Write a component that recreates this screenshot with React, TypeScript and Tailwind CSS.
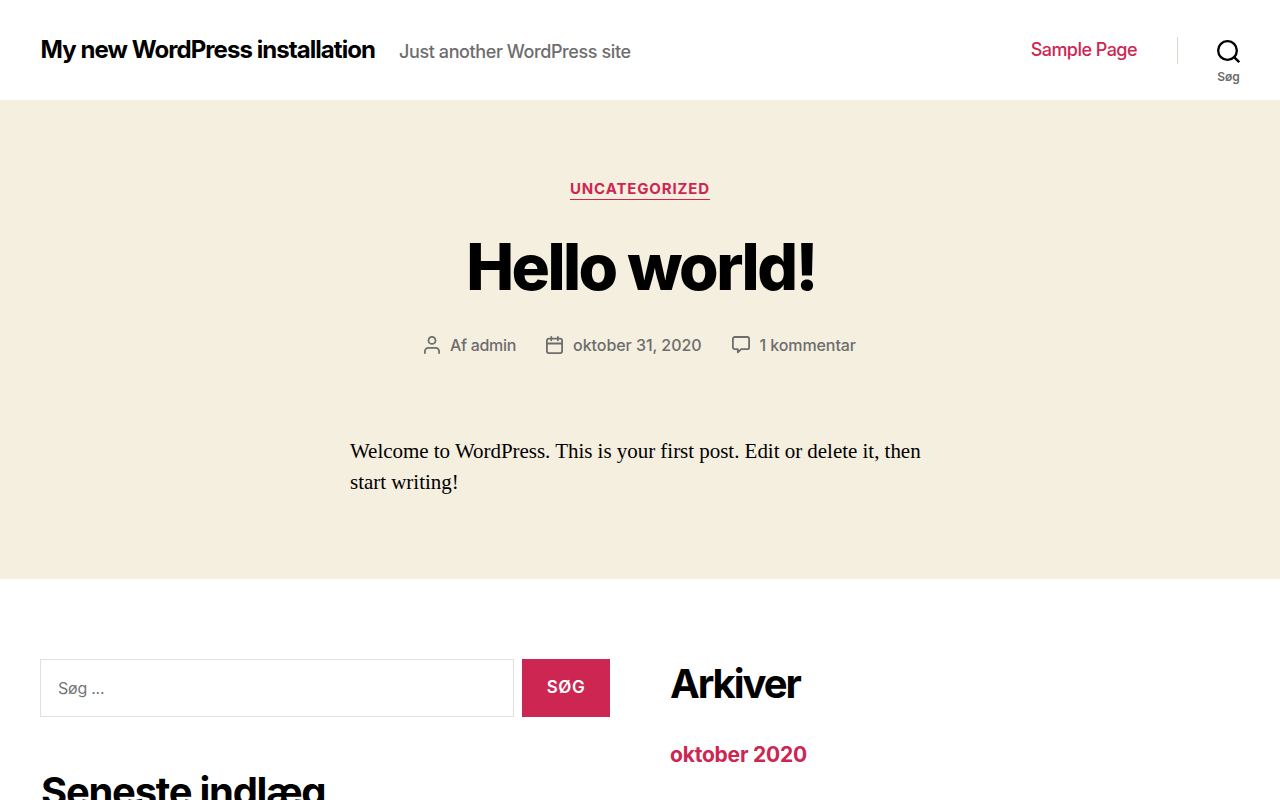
import React from 'react';

interface MetaItemProps {
  icon: React.ReactNode;
  className?: string;
  children: React.ReactNode;
}

interface WidgetTitleProps {
  className?: string;
  children: React.ReactNode;
}

const SearchIcon = () => (
  <svg width="23" height="23" viewBox="0 0 23 23" fill="none" stroke="currentColor" strokeWidth="2.33" aria-hidden="true">
    <circle cx="10.5" cy="10.5" r="9.34" />
    <path d="M16.6 16.6L22.2 22.2" />
  </svg>
);

const UserIcon = () => (
  <svg width="16" height="18" viewBox="0 0 16 18" fill="none" stroke="currentColor" strokeWidth="1.8" strokeLinecap="round" aria-hidden="true">
    <circle cx="8" cy="4.4" r="3.5" />
    <path d="M0.9 17.1v-1.6a3.6 3.6 0 0 1 3.6-3.6h7a3.6 3.6 0 0 1 3.6 3.6v1.6" />
  </svg>
);

const CalendarIcon = () => (
  <svg width="17" height="18" viewBox="0 0 17 18" fill="none" stroke="currentColor" strokeWidth="1.8" strokeLinecap="round" aria-hidden="true">
    <rect x="0.9" y="2.6" width="15.2" height="14.5" rx="2" />
    <path d="M1 7.5h15M5.3 0.9v3.4M11.9 0.9v3.4" />
  </svg>
);

const CommentIcon = () => (
  <svg width="18" height="18" viewBox="0 0 18 18" fill="none" stroke="currentColor" strokeWidth="1.8" strokeLinejoin="round" aria-hidden="true">
    <path d="M2.7 1h12.6a1.8 1.8 0 0 1 1.8 1.8v8.6a1.8 1.8 0 0 1-1.8 1.8H9.2L5.8 16.3v-3.1H2.7a1.8 1.8 0 0 1-1.8-1.8V2.8A1.8 1.8 0 0 1 2.7 1z" />
  </svg>
);

const MetaItem = ({ icon, className = '', children }: MetaItemProps) => (
  <li className={`flex items-center gap-[10px] ${className}`}>
    <span className="flex shrink-0">{icon}</span>
    <span>{children}</span>
  </li>
);

const WidgetTitle = ({ className = '', children }: WidgetTitleProps) => (
  <h2 className={`text-[40px] leading-[50px] font-bold whitespace-nowrap ${className}`}>{children}</h2>
);

const Header = () => (
  <header className="flex h-[100px] items-start justify-between bg-white px-10">
    <div className="flex items-baseline gap-6 pt-[35px] pl-[0.5px] whitespace-nowrap">
      <h1 className="text-2xl leading-[30px] font-bold tracking-[-0.039em]">My new WordPress installation</h1>
      <p className="text-lg leading-[27px] font-[450] tracking-[-0.0225em] text-[#6d6d6d]">Just another WordPress site</p>
    </div>
    <div className="flex pt-[37px]">
      <nav className="pr-10 text-lg leading-[25px] font-medium tracking-[-0.03em] text-[#cd2653]">
        <a href="#">Sample Page</a>
      </nav>
      <div className="h-[27px] w-px bg-[#dcd7ca]" />
      <button className="ml-[39px] flex h-[50px] flex-col items-center pt-[3px]">
        <SearchIcon />
        <span className="mt-[6px] text-xs leading-[15px] font-semibold text-[#6d6d6d]">Søg</span>
      </button>
    </div>
  </header>
);

const Post = () => (
  <article className="flex h-[479px] flex-col items-center bg-[#f5efe0] pt-20">
    <a
      href="#"
      className="border-b border-[#cd2653] pb-px text-[15px] leading-[18px] font-bold tracking-[0.057em] text-[#cd2653] uppercase"
    >
      Uncategorized
    </a>
    <h2 className="mt-[31px] pl-[2px] text-[64px] leading-[72px] font-extrabold tracking-[-0.0395em]">Hello world!</h2>
    <ul className="mt-[30px] flex gap-[30px] text-base leading-6 font-medium text-[#6d6d6d]">
      <MetaItem icon={<UserIcon />} className="tracking-[-0.02em]">
        Af admin
      </MetaItem>
      <MetaItem icon={<CalendarIcon />} className="tracking-[-0.003em]">
        oktober 31, 2020
      </MetaItem>
      <MetaItem icon={<CommentIcon />} className="tracking-[-0.006em]">
        1 kommentar
      </MetaItem>
    </ul>
    <p className="mt-[79px] w-[580px] font-['Liberation_Serif',serif] text-[21px] leading-[31px] tracking-[-0.0014em]">
      Welcome to WordPress. This is your first post. Edit or delete it, then start writing!
    </p>
  </article>
);

const Widgets = () => (
  <aside className="grid grid-cols-2 gap-[60px] px-10 pt-20">
    <div>
      <form className="flex gap-2">
        <input
          type="search"
          placeholder="Søg ..."
          className="h-[58px] min-w-0 flex-1 border border-[#dedfdf] px-[17px] text-base tracking-[-0.015em] placeholder:text-[#757575]"
        />
        <button type="button" className="h-[58px] w-[88px] bg-[#cd2653] pb-px text-[17px] font-semibold tracking-[0.0333em] text-white uppercase">
          Søg
        </button>
      </form>
      <div className="mt-[50px]">
        <WidgetTitle className="pl-px tracking-[-0.032em]">Seneste indlæg</WidgetTitle>
      </div>
    </div>
    <div>
      <WidgetTitle className="tracking-[-0.052em]">Arkiver</WidgetTitle>
      <ul className="mt-[31px] text-[21px] leading-[29px] font-bold tracking-[-0.01em] text-[#cd2653]">
        <li>
          <a href="#">oktober 2020</a>
        </li>
      </ul>
    </div>
  </aside>
);

const App = () => (
  <div className="h-screen overflow-hidden bg-white font-['Inter',sans-serif] text-black">
    <Header />
    <main>
      <Post />
    </main>
    <Widgets />
  </div>
);

export default App;
